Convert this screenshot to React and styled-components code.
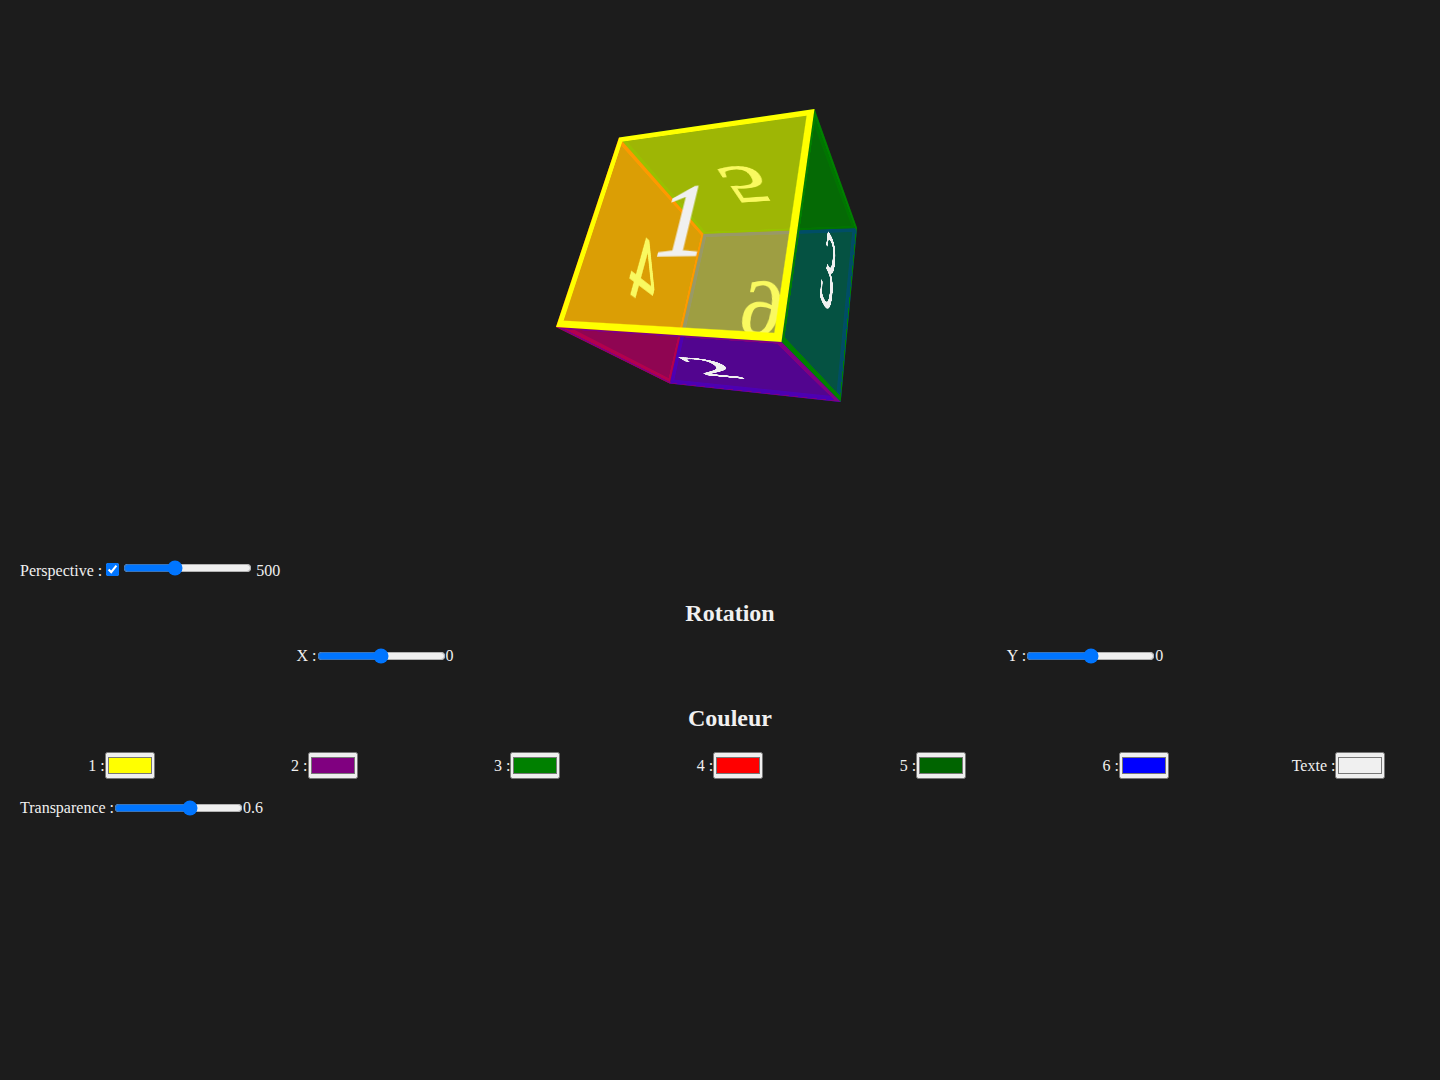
import React, { useState } from "react";
import styled, { createGlobalStyle } from "styled-components";

const FACE_SIZE = 200;

// corners on screen of the cube, f = near square, b = far square
const f = { tl: [619, 137.5], tr: [814.5, 109], br: [781.5, 342], bl: [556, 327] };
const b = { tl: [703.5, 233.8], tr: [857, 228], br: [840.7, 402], bl: [669.7, 383.5] };

// painted from far to near, colour index is the one of the pickers
const FACES = [
  { label: "6", color: 5, border: 5, quad: [b.tr, b.tl, b.bl, b.br] },
  { label: "5", color: 4, border: 5, quad: [b.tl, b.tr, f.tr, f.tl] },
  { label: "4", color: 3, border: 5, quad: [b.tl, f.tl, f.bl, b.bl] },
  { label: "3", color: 2, border: 5, quad: [f.tr, b.tr, b.br, f.br] },
  { label: "2", color: 1, border: 5, quad: [f.bl, f.br, b.br, b.bl] },
  { label: "1", color: 0, border: 6, quad: [f.tl, f.tr, f.br, f.bl] },
];

const COLORS = ["#ffff00", "#800080", "#008000", "#ff0000", "#006400", "#0000ff"];

// square of FACE_SIZE -> any four points
const quadToMatrix = ([p0, p1, p2, p3]) => {
  const s = FACE_SIZE;
  const dx1 = p1[0] - p2[0];
  const dx2 = p3[0] - p2[0];
  const sx = p0[0] - p1[0] + p2[0] - p3[0];
  const dy1 = p1[1] - p2[1];
  const dy2 = p3[1] - p2[1];
  const sy = p0[1] - p1[1] + p2[1] - p3[1];
  const det = dx1 * dy2 - dx2 * dy1;
  const g = (sx * dy2 - dx2 * sy) / det;
  const h = (dx1 * sy - sx * dy1) / det;
  const a = p1[0] - p0[0] + g * p1[0];
  const d = p3[0] - p0[0] + h * p3[0];
  const bb = p1[1] - p0[1] + g * p1[1];
  const e = p3[1] - p0[1] + h * p3[1];
  const m = [a / s, bb / s, 0, g / s, d / s, e / s, 0, h / s, 0, 0, 1, 0, p0[0], p0[1], 0, 1];
  return `matrix3d(${m.join(",")})`;
};

const hexToRgba = (hex, alpha) => {
  const n = parseInt(hex.slice(1), 16);
  return `rgba(${n >> 16}, ${(n >> 8) & 255}, ${n & 255}, ${alpha})`;
};

const GlobalStyle = createGlobalStyle`
  html, body {
    margin: 0;
    background: #1c1c1c;
  }
  body {
    color: #f0f0f0;
    font-family: "Liberation Serif", "Times New Roman", serif;
    font-size: 16px;
  }
`;

const Page = styled.div`
  padding-left: 20px;
`;

const Stage = styled.div`
  height: 560px;
  margin-left: -20px;
  position: relative;
  overflow: hidden;
`;

const Face = styled.div`
  position: absolute;
  left: 0;
  top: 0;
  width: ${FACE_SIZE}px;
  height: ${FACE_SIZE}px;
  box-sizing: border-box;
  display: flex;
  align-items: center;
  justify-content: center;
  border: ${(p) => p.$border}px solid ${(p) => p.$color};
  transform-origin: 0 0;
  will-change: transform;
  font-size: 100px;
  -webkit-text-stroke: 1.5px ${(p) => p.$text};
  color: ${(p) => p.$text};
`;

const Row = styled.div`
  margin-bottom: 20px;
`;

const SliderRow = styled.div`
  display: flex;
  align-items: center;
`;

const Title = styled.h2`
  margin: 20px 0;
  font-size: 24px;
  text-align: center;
`;

const Cells = styled.div`
  display: grid;
  grid-template-columns: repeat(${(p) => p.$count}, 1fr);
  padding-bottom: 20px;
`;

const Cell = styled.div`
  display: flex;
  align-items: center;
  justify-content: center;
`;

const Slider = styled.input.attrs({ type: "range" })`
  margin: 0;
  width: 129px;
`;

const Check = styled.input.attrs({ type: "checkbox" })`
  margin: 3px 4px 3px 4px;
`;

const Swatch = styled.input.attrs({ type: "color" })`
  margin: 0;
  width: 50px;
  height: 27px;
  padding: 4px 2px;
  &::-webkit-color-swatch-wrapper {
    padding: 0;
  }
`;

const App = () => {
  const [colors, setColors] = useState(COLORS);
  const [text, setText] = useState("#f0f0f0");
  const [alpha, setAlpha] = useState(0.6);
  const [persp, setPersp] = useState(500);
  const [rotX, setRotX] = useState(0);
  const [rotY, setRotY] = useState(0);

  const pick = (i, value) => setColors(colors.map((c, j) => (j === i ? value : c)));

  return (
    <Page>
      <GlobalStyle />
      <Stage>
        {FACES.map((face) => (
          <Face
            key={face.label}
            $color={colors[face.color]}
            $border={face.border}
            $text={text}
            style={{
              transform: quadToMatrix(face.quad),
              background: hexToRgba(colors[face.color], alpha),
            }}
          >
            {face.label}
          </Face>
        ))}
      </Stage>

      <Row>
        Perspective :<Check defaultChecked />
        <Slider min="0" max="1300" value={persp} onChange={(e) => setPersp(e.target.value)} /> {persp}
      </Row>

      <Title>Rotation</Title>
      <Cells $count={2}>
        <Cell>
          X :<Slider min="-180" max="180" value={rotX} onChange={(e) => setRotX(e.target.value)} />
          {rotX}
        </Cell>
        <Cell>
          Y :<Slider min="-180" max="180" value={rotY} onChange={(e) => setRotY(e.target.value)} />
          {rotY}
        </Cell>
      </Cells>

      <Title>Couleur</Title>
      <Cells $count={7}>
        {colors.map((c, i) => (
          <Cell key={i}>
            {i + 1} :<Swatch value={c} onChange={(e) => pick(i, e.target.value)} />
          </Cell>
        ))}
        <Cell>
          Texte :<Swatch value={text} onChange={(e) => setText(e.target.value)} />
        </Cell>
      </Cells>

      <SliderRow>
        Transparence :<Slider min="0" max="1" step="0.1" value={alpha} onChange={(e) => setAlpha(e.target.value)} />
        {alpha}
      </SliderRow>
    </Page>
  );
};

export default App;
